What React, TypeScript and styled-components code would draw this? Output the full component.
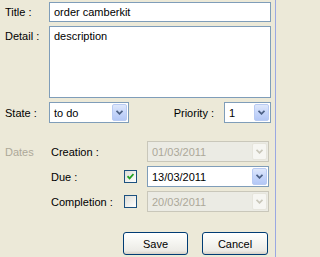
import React from "react";
import styled, { createGlobalStyle } from "styled-components";

const GlobalStyle = createGlobalStyle`
  html, body {
    margin: 0;
    padding: 0;
    background: #ece9d8;
  }
  body {
    font-family: "Liberation Sans", Tahoma, Arial, sans-serif;
    font-size: 11px;
    color: #000;
  }
`;

const Window = styled.div`
  width: 275px;
  height: 257px;
  border-right: 1px solid #9aa8e2;
  background: #ece9d8;
  display: flex;
  flex-direction: column;
`;

const TopForm = styled.div`
  display: grid;
  grid-template-columns: 44px 1fr;
  row-gap: 4px;
  padding: 2px 4px 0 5px;
`;

const Label = styled.div<{ $top?: boolean }>`
  display: flex;
  align-items: ${(p) => (p.$top ? "flex-start" : "center")};
  padding-top: ${(p) => (p.$top ? "4px" : "0")};
  white-space: nowrap;
`;

const TextInput = styled.input`
  box-sizing: border-box;
  height: 20px;
  width: 100%;
  margin: 0;
  border: 1px solid #7f9db9;
  background: #fff;
  padding: 0 4px;
  font: inherit;
  color: #000;
  outline: none;
`;

const TextArea = styled.textarea`
  box-sizing: border-box;
  height: 72px;
  width: 100%;
  margin: 0;
  border: 1px solid #7f9db9;
  background: #fff;
  padding: 3px 4px;
  font: inherit;
  color: #000;
  resize: none;
  outline: none;
  display: block;
`;

const StateRow = styled.div`
  display: flex;
  align-items: center;
`;

const Spacer = styled.div`
  flex: 1;
`;

const PriorityLabel = styled.span`
  margin-right: 10px;
`;

const ComboBox = styled.div<{ $width?: number; $disabled?: boolean }>`
  box-sizing: border-box;
  width: ${(p) => (p.$width ? `${p.$width}px` : "100%")};
  height: 21px;
  border: 1px solid ${(p) => (p.$disabled ? "#c9c7ba" : "#7f9db9")};
  background: ${(p) => (p.$disabled ? "#ebebe4" : "#fff")};
  color: ${(p) => (p.$disabled ? "#aca899" : "#000")};
  display: flex;
  align-items: center;
  padding: 1px;
`;

const ComboText = styled.span`
  flex: 1;
  padding-left: 3px;
  white-space: nowrap;
  overflow: hidden;
`;

const DropButton = styled.div<{ $disabled?: boolean }>`
  box-sizing: border-box;
  width: 15px;
  height: 17px;
  border: 1px solid ${(p) => (p.$disabled ? "#e6e5dc" : "#b9cbf3")};
  border-radius: 2px;
  background: ${(p) =>
    p.$disabled
      ? "#f6f6f2"
      : "linear-gradient(180deg, #dfe8fb 0%, #c6d6fa 50%, #b4c8f6 100%)"};
  display: flex;
  align-items: center;
  justify-content: center;
`;

const DatesGrid = styled.div`
  display: grid;
  grid-template-columns: 46px 73px 23px 1fr;
  grid-auto-rows: 21px;
  row-gap: 4px;
  padding: 0 6px 0 5px;
  margin-top: 18px;
  align-items: center;
`;

const SectionLabel = styled.div`
  color: #aca899;
`;

const CheckBox = styled.div`
  box-sizing: border-box;
  width: 13px;
  height: 13px;
  border: 1px solid #1c5180;
  background: linear-gradient(135deg, #dcdcd7 0%, #f2f2ef 60%, #ffffff 100%);
  display: flex;
  align-items: center;
  justify-content: center;
`;

const ButtonBar = styled.div`
  display: flex;
  justify-content: flex-end;
  gap: 14px;
  padding: 0 7px 0 0;
  margin-top: 20px;
`;

const Button = styled.button<{ $width: number }>`
  box-sizing: border-box;
  width: ${(p) => p.$width}px;
  height: 23px;
  margin: 0;
  border: 1px solid #003c74;
  border-radius: 3px;
  background: linear-gradient(180deg, #ffffff 0%, #f5f5f1 45%, #ecebe6 85%, #d6d0c5 100%);
  font: inherit;
  color: #000;
  padding: 0;
`;

const Arrow = ({ disabled }: { disabled?: boolean }) => (
  <svg width="7" height="5" viewBox="0 0 7 5">
    <path
      d="M0.5 0.8 L3.5 3.8 L6.5 0.8"
      fill="none"
      stroke={disabled ? "#c9c7ba" : "#4d6185"}
      strokeWidth="1.8"
    />
  </svg>
);

const Combo = ({
  value,
  width,
  disabled,
}: {
  value: string;
  width?: number;
  disabled?: boolean;
}) => (
  <ComboBox $width={width} $disabled={disabled}>
    <ComboText>{value}</ComboText>
    <DropButton $disabled={disabled}>
      <Arrow disabled={disabled} />
    </DropButton>
  </ComboBox>
);

const Check = ({ checked }: { checked?: boolean }) => (
  <CheckBox>
    {checked && (
      <svg width="7" height="7" viewBox="0 0 7 7">
        <path d="M0.5 3.2 L2.6 5.4 L6.5 1" fill="none" stroke="#21a121" strokeWidth="1.8" />
      </svg>
    )}
  </CheckBox>
);

export default function App() {
  return (
    <>
      <GlobalStyle />
      <Window>
        <TopForm>
          <Label>Title :</Label>
          <TextInput readOnly value="order camberkit" />
          <Label $top>Detail :</Label>
          <TextArea readOnly value="description" />
          <Label>State :</Label>
          <StateRow>
            <Combo value="to do" width={80} />
            <Spacer />
            <PriorityLabel>Priority :</PriorityLabel>
            <Combo value="1" width={47} />
          </StateRow>
        </TopForm>

        <DatesGrid>
          <SectionLabel>Dates</SectionLabel>
          <Label>Creation :</Label>
          <span />
          <Combo value="01/03/2011" disabled />

          <span />
          <Label>Due :</Label>
          <Check checked />
          <Combo value="13/03/2011" />

          <span />
          <Label>Completion :</Label>
          <Check />
          <Combo value="20/03/2011" disabled />
        </DatesGrid>

        <ButtonBar>
          <Button $width={65}>Save</Button>
          <Button $width={66}>Cancel</Button>
        </ButtonBar>
      </Window>
    </>
  );
}
